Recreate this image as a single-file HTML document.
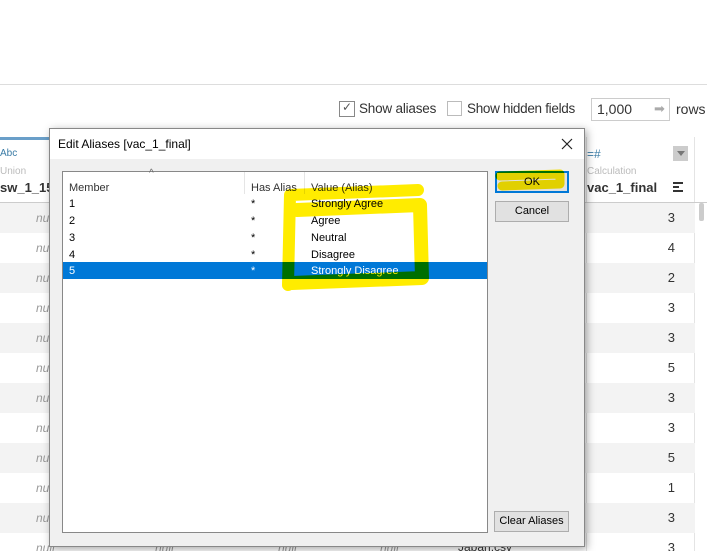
<!DOCTYPE html>
<html><head><style>
*{margin:0;padding:0;box-sizing:border-box}
html,body{width:707px;height:551px;overflow:hidden}
body{background:#fff;font-family:"Liberation Sans",sans-serif;position:relative}
.a{position:absolute}
.row{position:absolute;left:0;width:695px;height:30px}
.num{position:absolute;right:20px;font-size:13px;color:#333}
.nu{position:absolute;left:36px;font-size:12px;color:#999;font-style:italic}
.d{font-size:11px;color:#000}
</style></head><body>
<div class="a" style="left:0;top:84px;width:707px;height:1px;background:#ddd"></div>
<div class="a" style="left:339px;top:101px;width:16px;height:16px;border:1px solid #888;background:#fff"></div>
<div class="a" style="left:342px;top:100px;font-size:12px;color:#555">✓</div>
<div class="a" style="left:359px;top:101px;font-size:13.5px;color:#333;letter-spacing:-0.2px">Show aliases</div>
<div class="a" style="left:447px;top:101px;width:15px;height:15px;border:1px solid #bbb;background:#fff"></div>
<div class="a" style="left:467px;top:101px;font-size:13.5px;color:#333;letter-spacing:-0.3px">Show hidden fields</div>
<div class="a" style="left:591px;top:98px;width:79px;height:23px;border:1px solid #ccc;background:#fff"></div>
<div class="a" style="left:597px;top:101px;font-size:14px;color:#333">1,000</div>
<div class="a" style="left:654px;top:101px;font-size:13px;color:#aaa">➡</div>
<div class="a" style="left:676px;top:101px;font-size:14px;color:#333">rows</div>
<div class="a" style="left:0;top:137px;width:50px;height:3px;background:#6a9fc9"></div>
<div class="a" style="left:0;top:148px;font-size:10px;color:#3b7ca6">Abc</div>
<div class="a" style="left:0;top:166px;font-size:10px;color:#bbb">Union</div>
<div class="a" style="left:0;top:180px;font-size:13px;color:#333;font-weight:bold">sw_1_15</div>
<div class="a" style="left:586px;top:137px;width:1px;height:420px;background:#e4e4e4"></div>
<div class="a" style="left:694px;top:137px;width:1px;height:420px;background:#e4e4e4"></div>
<div class="a" style="left:587px;top:147px;font-size:12px;color:#3b7ca6">=#</div>
<div class="a" style="left:673px;top:146px;width:15px;height:15px;background:#ccc"></div>
<div class="a" style="left:677px;top:151px;width:0;height:0;border-left:4px solid transparent;border-right:4px solid transparent;border-top:5px solid #777"></div>
<div class="a" style="left:587px;top:166px;font-size:10px;color:#bbb">Calculation</div>
<div class="a" style="left:587px;top:180px;font-size:13px;color:#333;font-weight:bold">vac_1_final</div>
<div class="a" style="left:673px;top:182px;width:10px;height:2px;background:#333"></div>
<div class="a" style="left:673px;top:186px;width:6px;height:2px;background:#333"></div>
<div class="a" style="left:673px;top:190px;width:10px;height:2px;background:#333"></div>
<div class="a" style="left:0;top:202px;width:707px;height:1px;background:#ccc"></div>
<div class="a" style="left:699px;top:203px;width:5px;height:18px;background:#ccc;border-radius:2px"></div>
<div class="row" style="top:203px;background:#f3f3f3"><span class="nu" style="top:8px">nu</span><span class="num" style="top:7px">3</span></div>
<div class="row" style="top:233px"><span class="nu" style="top:8px">nu</span><span class="num" style="top:7px">4</span></div>
<div class="row" style="top:263px;background:#f3f3f3"><span class="nu" style="top:8px">nu</span><span class="num" style="top:7px">2</span></div>
<div class="row" style="top:293px"><span class="nu" style="top:8px">nu</span><span class="num" style="top:7px">3</span></div>
<div class="row" style="top:323px;background:#f3f3f3"><span class="nu" style="top:8px">nu</span><span class="num" style="top:7px">3</span></div>
<div class="row" style="top:353px"><span class="nu" style="top:8px">nu</span><span class="num" style="top:7px">5</span></div>
<div class="row" style="top:383px;background:#f3f3f3"><span class="nu" style="top:8px">nu</span><span class="num" style="top:7px">3</span></div>
<div class="row" style="top:413px"><span class="nu" style="top:8px">nu</span><span class="num" style="top:7px">3</span></div>
<div class="row" style="top:443px;background:#f3f3f3"><span class="nu" style="top:8px">nu</span><span class="num" style="top:7px">5</span></div>
<div class="row" style="top:473px"><span class="nu" style="top:8px">nu</span><span class="num" style="top:7px">1</span></div>
<div class="row" style="top:503px;background:#f3f3f3"><span class="nu" style="top:8px">nu</span><span class="num" style="top:7px">3</span></div>
<div class="row" style="top:533px"><span class="nu" style="top:8px">null</span><span class="nu" style="left:155px;top:8px">null</span><span class="nu" style="left:278px;top:8px">null</span><span class="nu" style="left:380px;top:8px">null</span><span style="position:absolute;left:458px;top:7px;font-size:12px;color:#333">Japan.csv</span><span class="num" style="top:7px">3</span></div>
<div class="a" style="left:49px;top:128px;width:536px;height:419px;background:#f0f0f0;border:1px solid #888;box-shadow:2px 2px 8px rgba(0,0,0,.35)">
 <div class="a" style="left:0;top:0;width:534px;height:30px;background:#fff"></div>
 <div class="a" style="left:8px;top:8px;font-size:12px;color:#000">Edit Aliases [vac_1_final]</div>
 <svg class="a" style="left:511px;top:9px" width="12" height="12"><path d="M1 1L11 11M11 1L1 11" stroke="#222" stroke-width="1.2"/></svg>
 <div class="a" style="left:12px;top:42px;width:426px;height:362px;background:#fff;border:1px solid #888">
  <div class="a" style="left:86px;top:-4px;font-size:10px;color:#666">^</div>
  <div class="a" style="left:181px;top:0;width:1px;height:22px;background:#e5e5e5"></div>
  <div class="a" style="left:241px;top:0;width:1px;height:22px;background:#e5e5e5"></div>
  <div class="a" style="left:6px;top:6px"><span class="d" style="color:#333">Member</span></div>
  <div class="a" style="left:188px;top:6px"><span class="d" style="color:#333">Has Alias</span></div>
  <div class="a" style="left:248px;top:6px"><span class="d" style="color:#333">Value (Alias)</span></div>
  <div class="a d" style="left:6px;top:26px">1</div><div class="a d" style="left:188px;top:26px">*</div><div class="a d" style="left:248px;top:26px">Strongly Agree</div>
  <div class="a d" style="left:6px;top:43px">2</div><div class="a d" style="left:188px;top:43px">*</div><div class="a d" style="left:248px;top:43px">Agree</div>
  <div class="a d" style="left:6px;top:60px">3</div><div class="a d" style="left:188px;top:60px">*</div><div class="a d" style="left:248px;top:60px">Neutral</div>
  <div class="a d" style="left:6px;top:77px">4</div><div class="a d" style="left:188px;top:77px">*</div><div class="a d" style="left:248px;top:77px">Disagree</div>
  <div class="a" style="left:0;top:90px;width:424px;height:17px;background:#0078d7"></div>
  <div class="a d" style="left:6px;top:93px;color:#fff">5</div><div class="a d" style="left:188px;top:93px;color:#fff">*</div><div class="a d" style="left:248px;top:93px;color:#fff">Strongly Disagree</div>
 </div>
 <div class="a" style="left:445px;top:42px;width:74px;height:22px;border:2px solid #0078d7;background:#e1e1e1;font-size:11px;text-align:center;line-height:18px">OK</div>
 <div class="a" style="left:445px;top:72px;width:74px;height:21px;border:1px solid #adadad;background:#e1e1e1;font-size:11px;text-align:center;line-height:19px">Cancel</div>
 <div class="a" style="left:444px;top:382px;width:75px;height:21px;border:1px solid #adadad;background:#e1e1e1;font-size:11px;text-align:center;line-height:19px">Clear Aliases</div>
</div>
<svg class="a" style="left:0;top:0;mix-blend-mode:multiply" width="707" height="551">
 <g fill="none" stroke="#ffec00" stroke-linecap="round" stroke-linejoin="round">
  <path d="M288 285 L290 195 L418 190" stroke-width="12"/>
  <path d="M297 210 L420 205 L422 278 L292 283" stroke-width="14"/>
  <path d="M500 176 L560 174 L560 184 L502 186" stroke-width="9"/>
 </g>
</svg>
</body></html>
